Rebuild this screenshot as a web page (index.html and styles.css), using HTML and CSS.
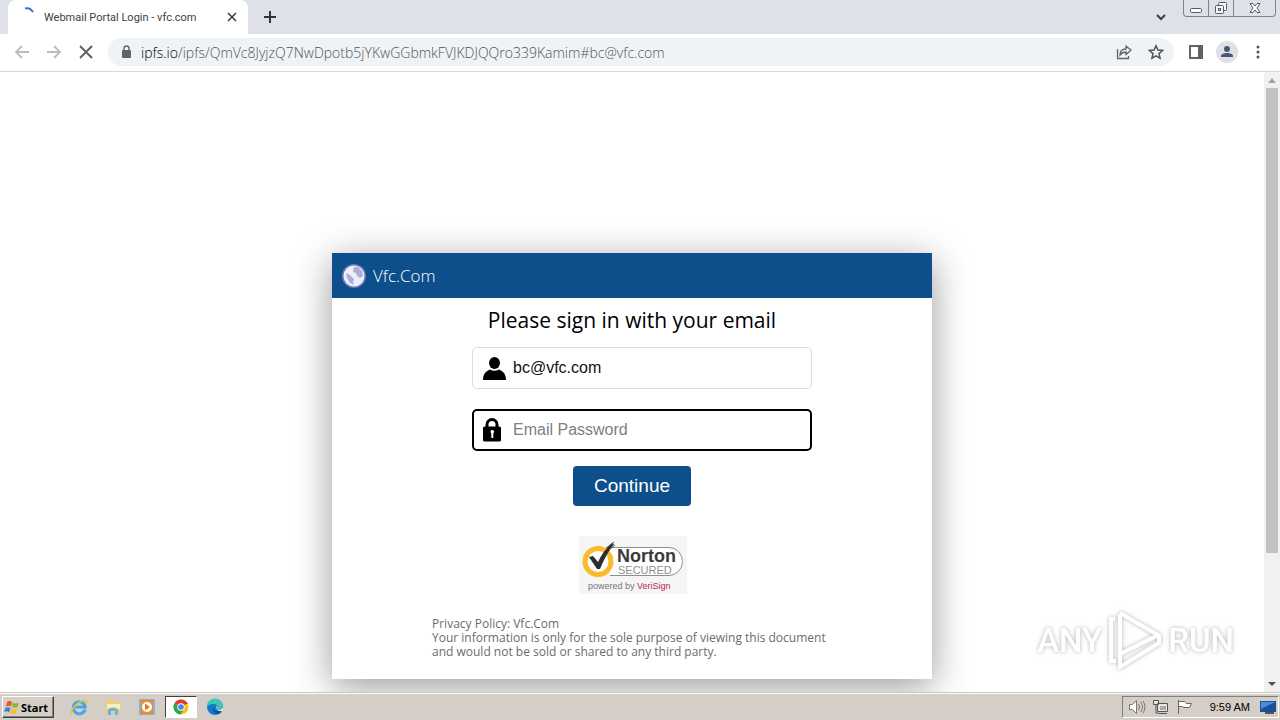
FILE: index.html
```html
<!DOCTYPE html>
<html lang="en">
<head>
<meta charset="utf-8">
<title>Webmail Portal Login - vfc.com</title>
<link rel="stylesheet" href="styles.css">
</head>
<body>

<!-- tab strip -->
<header class="tabstrip">
  <div class="tab">
    <svg class="spinner" width="16" height="16" viewBox="0 0 16 16"><path d="M5 1.500Q10 0 13 5" fill="none" stroke="#2b78d8" stroke-width="2"/></svg>
    <span class="tab-title">Webmail Portal Login - vfc.com</span>
    <button class="icon-btn" aria-label="Close tab"><svg width="16" height="16" viewBox="0 0 16 16"><path d="M4 4l8 8M12 4l-8 8" stroke="#3c4043" stroke-width="1.600"/></svg></button>
  </div>
  <button class="icon-btn new-tab" aria-label="New tab"><svg width="16" height="16" viewBox="0 0 16 16"><path d="M8 2v12M2 8h12" stroke="#303236" stroke-width="2"/></svg></button>
  <button class="icon-btn tab-search" aria-label="Search tabs"><svg width="16" height="16" viewBox="0 0 16 16"><path d="M4 6l4 4 4-4" fill="none" stroke="#3c4043" stroke-width="2"/></svg></button>
  <div class="window-buttons">
    <button aria-label="Minimize"><svg width="16" height="16" viewBox="0 0 16 16"><rect x="2.500" y="8.500" width="11" height="4" rx="1" fill="#fff" stroke="#555a66"/></svg></button>
    <button aria-label="Restore"><svg width="16" height="16" viewBox="0 0 16 16"><g fill="#f4f5f8" stroke="#555a66"><rect x="5.500" y="2.500" width="8" height="8" rx="1"/><rect x="2.500" y="5.500" width="8" height="8" rx="1"/><rect x="5.500" y="8.500" width="2" height="2"/></g></svg></button>
    <button class="close" aria-label="Close"><svg width="16" height="16" viewBox="0 0 16 16"><path d="M3 3.500h3l2 2.500 2-2.500h3L10 8l3 4.500h-3L8 10l-2 2.500H3L6 8z" fill="#fff" stroke="#555a66"/></svg></button>
  </div>
</header>

<!-- address bar -->
<nav class="toolbar">
  <button class="icon-btn" aria-label="Back"><svg width="20" height="20" viewBox="0 0 20 20"><path d="M17 10H4M10 4l-6 6 6 6" fill="none" stroke="#babcbe" stroke-width="1.800"/></svg></button>
  <button class="icon-btn" aria-label="Forward"><svg width="20" height="20" viewBox="0 0 20 20"><path d="M3 10h13M10 4l6 6-6 6" fill="none" stroke="#babcbe" stroke-width="1.800"/></svg></button>
  <button class="icon-btn" aria-label="Stop"><svg width="20" height="20" viewBox="0 0 20 20"><path d="M4 4l12 12M16 4L4 16" stroke="#5f6368" stroke-width="2"/></svg></button>
  <div class="omnibox">
    <svg width="16" height="16" viewBox="0 0 16 16"><rect x="4" y="6" width="9" height="8" rx="1" fill="#5f6368"/><path d="M6 7V4.500a2.500 2.500 0 0 1 5 0V7" fill="none" stroke="#5f6368" stroke-width="1.400"/></svg>
    <span class="url"><b>ipfs.io</b>/ipfs/QmVc8JyjzQ7NwDpotb5jYKwGGbmkFVJKDJQQro339Kamim#bc@vfc.com</span>
    <button class="icon-btn" aria-label="Share"><svg width="16" height="16" viewBox="0 0 16 16"><path d="M1.500 5v9.500h11V12M4 11c0-4 2-6 6-6V2l5 4-5 4.500V8C7 8 5.500 9 4 11z" fill="none" stroke="#5f6368" stroke-width="1.300"/></svg></button>
    <button class="icon-btn" aria-label="Bookmark"><svg width="16" height="16" viewBox="0 0 16 16"><path d="M8 1.800l1.900 4.300 4.700.4-3.600 3.100 1.100 4.600L8 11.800l-4.100 2.400L5 9.600 1.400 6.500l4.700-.4z" fill="none" stroke="#505358" stroke-width="1.500"/></svg></button>
  </div>
  <button class="icon-btn side-panel" aria-label="Side panel"><svg width="16" height="16" viewBox="0 0 16 16"><rect x="2" y="2" width="12" height="12" fill="#fff" stroke="#5f6368" stroke-width="2"/><path d="M10 2h4v12h-4z" fill="#5f6368"/></svg></button>
  <button class="icon-btn" aria-label="Profile"><svg width="22" height="22" viewBox="0 0 22 22"><circle cx="11" cy="11" r="11" fill="#dee1e6"/><circle cx="11" cy="8" r="3" fill="#4a5673"/><path d="M5 16v-1c0-4 12-4 12 0v1z" fill="#4a5673"/></svg></button>
  <button class="icon-btn" aria-label="Menu"><svg width="16" height="16" viewBox="0 0 16 16"><g fill="#505358"><circle cx="8" cy="3" r="1.500"/><circle cx="8" cy="8" r="1.500"/><circle cx="8" cy="13" r="1.500"/></g></svg></button>
</nav>

<!-- page -->
<div class="view">
  <main class="page">
    <div class="card">
      <div class="card-head">
        <svg width="26" height="26" viewBox="0 0 26 26">
          <defs><filter id="soft"><feGaussianBlur stdDeviation=".7"/></filter></defs>
          <g filter="url(#soft)">
            <circle cx="13" cy="13" r="12" fill="#7078b8"/>
            <circle cx="13" cy="13" r="10.500" fill="#eceefa"/>
            <path d="M13 4l4 0 4 4 1 5-3 2-3-2-1-3-3-1zM5 10l4 2 4 4-1 3 1 3-4-2-3-5z" fill="#a9b0d8"/>
          </g>
        </svg>
        <span>Vfc.Com</span>
      </div>
      <form class="login">
        <h1>Please sign in with your email</h1>
        <div class="field">
          <label for="email" aria-label="Email"><svg width="24" height="24" viewBox="0 0 24 24"><ellipse cx="12.500" cy="7" rx="5.500" ry="6"/><path d="M1 24c0-6 3-9 7-10.500q4.500 2.500 9 0c4 1.500 7 4.500 7 10.500z"/></svg></label>
          <input type="email" id="email" value="bc@vfc.com">
        </div>
        <div class="field active">
          <label for="password" aria-label="Password"><svg width="24" height="24" viewBox="0 0 24 24"><path d="M5 11V6.500a5 5 0 0 1 10 0v4.500" fill="none" stroke="#000" stroke-width="3"/><rect x="1" y="8.500" width="18" height="15" rx="1.500"/><path d="M8.500 14a1.800 1.800 0 1 1 2.800 1.300V20h-2v-4.500z" fill="#fff"/></svg></label>
          <input type="password" id="password" placeholder="Email Password">
        </div>
        <button type="button" class="continue">Continue</button>
        <svg class="seal" width="108" height="58" viewBox="0 0 108 58">
          <rect width="108" height="58" fill="#f5f5f5"/>
          <path d="M31 11.500h59a13.500 14 0 0 1 0 28H31" fill="#fff" stroke="#8e8e8e"/>
          <circle cx="19" cy="25.500" r="13" fill="#fff" stroke="#fbb92c" stroke-width="5"/>
          <path d="M10 21l4-1 5 6q5-11 14-19l2 1Q27 18 21 33h-3z" fill="#2d2d2d"/>
          <path d="M27 12l8-6M30 14l6-5" stroke="#555"/>
          <text class="norton" x="38" y="26">Norton</text>
          <text class="secured" x="39" y="38">SECURED</text>
          <text class="powered" x="9" y="53">powered by <tspan class="verisign">VeriSign</tspan></text>
        </svg>
        <p class="policy">Privacy Policy: Vfc.Com<br>Your information is only for the sole purpose of viewing this document<br>and would not be sold or shared to any third party.</p>
      </form>
    </div>
  </main>
  <div class="scrollbar">
    <svg width="16" height="16" viewBox="0 0 16 16"><path d="M4 11h8L8 6z" fill="#a3a3a3"/></svg>
    <div class="track"><div class="thumb"></div></div>
    <svg width="16" height="16" viewBox="0 0 16 16"><path d="M4 6h8l-4 4z" fill="#505050"/></svg>
  </div>
  <div class="watermark">
    <span>ANY</span>
    <svg width="60" height="64" viewBox="0 0 60 64"><g fill="none" stroke="#fff" stroke-width="4"><path d="M15 6v40l38-19L15 5"/><path d="M10 11H6v42h5"/><path d="M15 46v13l39-24v-8"/></g></svg>
    <span>RUN</span>
  </div>
</div>

<!-- taskbar -->
<footer class="taskbar">
  <button class="start"><svg width="16" height="16" viewBox="0 0 16 16"><path d="M3 3q3-2 5 0L7 7.500Q5 6 2 7.500z" fill="#e8562a"/><path d="M9 3.500q3 2 6 0L13.500 8q-3 1.500-5.500 0z" fill="#7db93c"/><path d="M1.500 9Q4 7.500 6.500 9L5 13.500q-2-2-5-.5z" fill="#3a80d2"/><path d="M7.500 9.500q3 1.500 5.500 0L12 14q-3 2-6 0z" fill="#f9bc2b"/></svg>Start</button>
  <div class="apps">
    <button aria-label="Internet Explorer"><svg width="18" height="18" viewBox="0 0 18 18"><path d="M15 11.500A6 6 0 1 1 15.200 9H5" fill="none" stroke="#45a7e4" stroke-width="3"/><path d="M2 16C-1 13 8 3 15 2q3 0 1 4" fill="none" stroke="#efc13c" stroke-width="1.500"/></svg></button>
    <button aria-label="Explorer"><svg width="18" height="18" viewBox="0 0 18 18"><path d="M2 3l6-1 1 2h7v11H2z" fill="#f0cf6a"/><path d="M3 6h13v5H3z" fill="#fbeeb4"/><path d="M4 17v-6q5-3 10 0v6h-3v-4H7v4z" fill="#69b3df"/></svg></button>
    <button aria-label="Media Player"><svg width="18" height="18" viewBox="0 0 18 18"><rect x="1" y="1" width="16" height="16" fill="#7fb2de"/><rect x="3" y="2" width="12" height="14" fill="#f38a1d"/><circle cx="9" cy="9" r="5" fill="#fff"/><path d="M7 5.500l5 3.500-5 3.500z" fill="#e8741a"/></svg></button>
    <button class="running" aria-label="Chrome"><svg width="16" height="16" viewBox="0 0 16 16"><circle cx="8" cy="8" r="7.500" fill="#fbc116"/><path d="M8 8L1.500 4.200a7.500 7.500 0 0 1 13 0z" fill="#e33b2e"/><path d="M8 8L1.500 4.200A7.500 7.500 0 0 0 7.500 15.500L11.500 9z" fill="#2da44e"/><path d="M8 4.500h6.700" stroke="#e33b2e"/><circle cx="8" cy="8" r="3.700" fill="#fff"/><circle cx="8" cy="8" r="2.800" fill="#4285f4"/></svg></button>
    <button aria-label="Edge"><svg width="18" height="18" viewBox="0 0 18 18"><circle cx="9" cy="9" r="8" fill="#1478c9"/><path d="M1 9a8 8 0 0 1 16-1c0 4-4 4-6 3 2-3-1-5-4-5-3 0-5 1-6 3z" fill="#3cc7b4"/><path d="M8 8c-2 3 1 6 6 5l2 0q-2 3-4 3C8 16 5 12 8 8z" fill="#0d4b9c"/><path d="M10 8q2 1 1 3 3 2 6-1v3q-7 1-7-5z" fill="#e3edf0"/></svg></button>
  </div>
  <div class="tray">
    <svg width="18" height="16" viewBox="0 0 18 16"><path d="M1.500 5.500h3l4-4v13l-4-4h-3z" fill="#fff" stroke="#777"/><path d="M10.500 5q2 3 0 6M12.500 3q4 5 0 10M15 2q4 6 0 12" fill="none" stroke="#777"/></svg>
    <svg width="18" height="16" viewBox="0 0 18 16"><path d="M5.500 4.500h10v8h-10zM7 14.500h8M1.500 1.500h5v4h-5zM4 6v8h3" fill="#e8e5e0" stroke="#555"/><path d="M8 7h6v4H8z" fill="#aaa"/></svg>
    <svg width="18" height="16" viewBox="0 0 18 16"><path d="M2.500 1v14M2.500 2.500h6l2 2h5l-2 4H8l-2-1H2.500z" fill="#fff" stroke="#666"/></svg>
    <time>9:59 AM</time>
    <svg width="16" height="16" viewBox="0 0 16 16"><rect y="2" width="16" height="11" fill="#1c4f9b"/><path d="M1 3h14L1 10z" fill="#4b8ddc"/><path d="M5 14h9" stroke="#555" stroke-width="2"/></svg>
  </div>
</footer>

</body>
</html>
```
FILE: styles.css
```css
* {
  box-sizing: border-box;
}
body {
  margin: 0;
  height: 100vh;
  display: flex;
  flex-direction: column;
  overflow: hidden;
  background: #fff;
  font-family: "Open Sans", "Noto Sans", sans-serif;
}
svg {
  display: block;
  flex: none;
}
button {
  padding: 0;
  border: none;
  background: none;
  font-family: inherit;
}

/* tabs */
.tabstrip {
  display: flex;
  align-items: center;
  height: 34px;
  padding: 0 4px 0 8px;
  background: #dee1e8;
}
.tab {
  display: flex;
  align-items: center;
  gap: 8px;
  width: 240px;
  height: 34px;
  padding: 0 8px 0 12px;
  border-radius: 8px 8px 0 0;
  background: #fff;
}
.spinner {
  margin-bottom: 4px;
}
.tab-title {
  flex: 1;
  font-family: Roboto, sans-serif;
  font-size: 11px;
  color: #3c4043;
  white-space: nowrap;
}
.new-tab {
  margin-left: 14px;
}
.tab-search {
  margin-left: auto;
  margin-right: 14px;
}
.window-buttons {
  display: flex;
  align-self: flex-start;
  height: 17px;
  border: 1px solid #80838c;
  border-top: none;
  border-radius: 0 0 4px 4px;
}
.window-buttons button {
  display: flex;
  justify-content: center;
  width: 25px;
  border-right: 1px solid #80838c;
}
.window-buttons .close {
  width: 41px;
  border-right: none;
}

/* toolbar */
.toolbar {
  display: flex;
  align-items: center;
  gap: 12px;
  height: 38px;
  padding: 0 14px 1px 12px;
  border-bottom: 1px solid #d6d8db;
}
.omnibox {
  flex: 1;
  display: flex;
  align-items: center;
  gap: 16px;
  height: 28px;
  padding: 0 10px;
  border-radius: 14px;
  background: #f0f3f5;
}
.url {
  flex: 1;
  margin-left: -9px;
  font-size: 14px;
  font-weight: 300;
  color: #505458;
  white-space: nowrap;
}
.url b {
  font-weight: 300;
  color: #000;
}
.side-panel {
  margin-left: 2px;
}

/* page */
.view {
  flex: 1;
  min-height: 0;
  display: flex;
  position: relative;
}
.page {
  flex: 1;
  padding-top: 181px;
  overflow: hidden;
}
.card {
  max-width: 600px;
  margin: 0 auto;
  background: #fff;
  box-shadow: 0 8px 36px rgba(0, 0, 0, 0.4);
}
.card-head {
  display: flex;
  align-items: center;
  gap: 6px;
  height: 45px;
  padding: 0 9px;
  background: #0d4f8b;
  color: #fff;
  font-size: 17px;
  font-weight: 300;
}
.login {
  display: flex;
  flex-direction: column;
  align-items: center;
  padding: 0 100px 20px;
}
.login h1 {
  margin: 7px 0 12px;
  font-size: 21px;
  line-height: 30px;
  font-weight: 500;
  white-space: nowrap;
}
.field {
  display: flex;
  align-items: center;
  gap: 7px;
  width: 340px;
  height: 42px;
  margin: 0 0 20px 20px;
  padding: 0 9px;
  border: 1px solid #ddd;
  border-radius: 5px;
}
.field.active {
  margin-bottom: 15px;
  padding: 0 8px;
  border: 2px solid #000;
}
.field input {
  flex: 1;
  min-width: 0;
  padding: 0;
  border: none;
  outline: none;
  background: none;
  color: #111;
  font-family: "Liberation Sans", Arial, sans-serif;
  font-size: 16px;
}
.field input::placeholder {
  color: #808080;
}
.continue {
  padding: 0 21px;
  border-radius: 4px;
  background: #0d4f8b;
  color: #fff;
  font-family: "Liberation Sans", Arial, sans-serif;
  font-size: 19px;
  line-height: 40px;
}
.seal {
  margin: 30px 0 23px 1px;
}
.seal text {
  font-family: "Liberation Sans", Arial, sans-serif;
}
.seal .norton {
  font-size: 18px;
  font-weight: bold;
  fill: #3a3a3a;
}
.seal .secured {
  font-size: 11px;
  fill: #909090;
}
.seal .powered {
  font-size: 9px;
  fill: #777;
}
.seal .verisign {
  fill: #b8274c;
}
.policy {
  align-self: flex-start;
  margin: 0;
  color: #6c6c6c;
  font-size: 12px;
  line-height: 14px;
  white-space: nowrap;
}

.scrollbar {
  display: flex;
  flex-direction: column;
  width: 16px;
  background: #f1f1f1;
}
.track {
  flex: 1;
  padding: 0 2px;
}
.thumb {
  height: 79%;
  background: #c1c1c1;
}

.watermark {
  position: absolute;
  right: 46px;
  bottom: 20px;
  display: flex;
  align-items: center;
  gap: 3px;
  color: #fff;
  font-family: Roboto, sans-serif;
  font-size: 33px;
  font-weight: 500;
  filter: drop-shadow(0 0 2px rgba(0, 0, 0, 0.3));
}

/* taskbar */
.taskbar {
  display: flex;
  align-items: center;
  height: 28px;
  padding: 1px 1px 0 2px;
  border-top: 1px solid #c8c4bc;
  box-shadow: inset 0 1px 0 #fff;
  background: #d4cec6;
}
.start {
  display: flex;
  align-items: center;
  gap: 1px;
  width: 52px;
  height: 22px;
  padding: 0 1px;
  border: 1px solid;
  border-color: #fff #404040 #404040 #fff;
  box-shadow: inset -1px -1px 0 #808080;
  font-family: "Noto Sans", sans-serif;
  font-size: 11px;
  font-weight: bold;
}
.apps {
  display: flex;
  margin-left: 9px;
  gap: 2px;
}
.apps button {
  display: flex;
  align-items: center;
  justify-content: center;
  width: 32px;
  height: 22px;
}
.apps .running {
  border: 1px solid;
  border-color: #404040 #fff #fff #404040;
  background: #fff;
}
.tray {
  display: flex;
  align-items: center;
  gap: 6px;
  height: 22px;
  margin-left: auto;
  padding: 0 2px 0 5px;
  border: 1px solid;
  border-color: #808080 #fff #fff #808080;
}
.tray time {
  margin: 0 4px 0 10px;
  font-family: "Liberation Sans", Arial, sans-serif;
  font-size: 11px;
}
```
